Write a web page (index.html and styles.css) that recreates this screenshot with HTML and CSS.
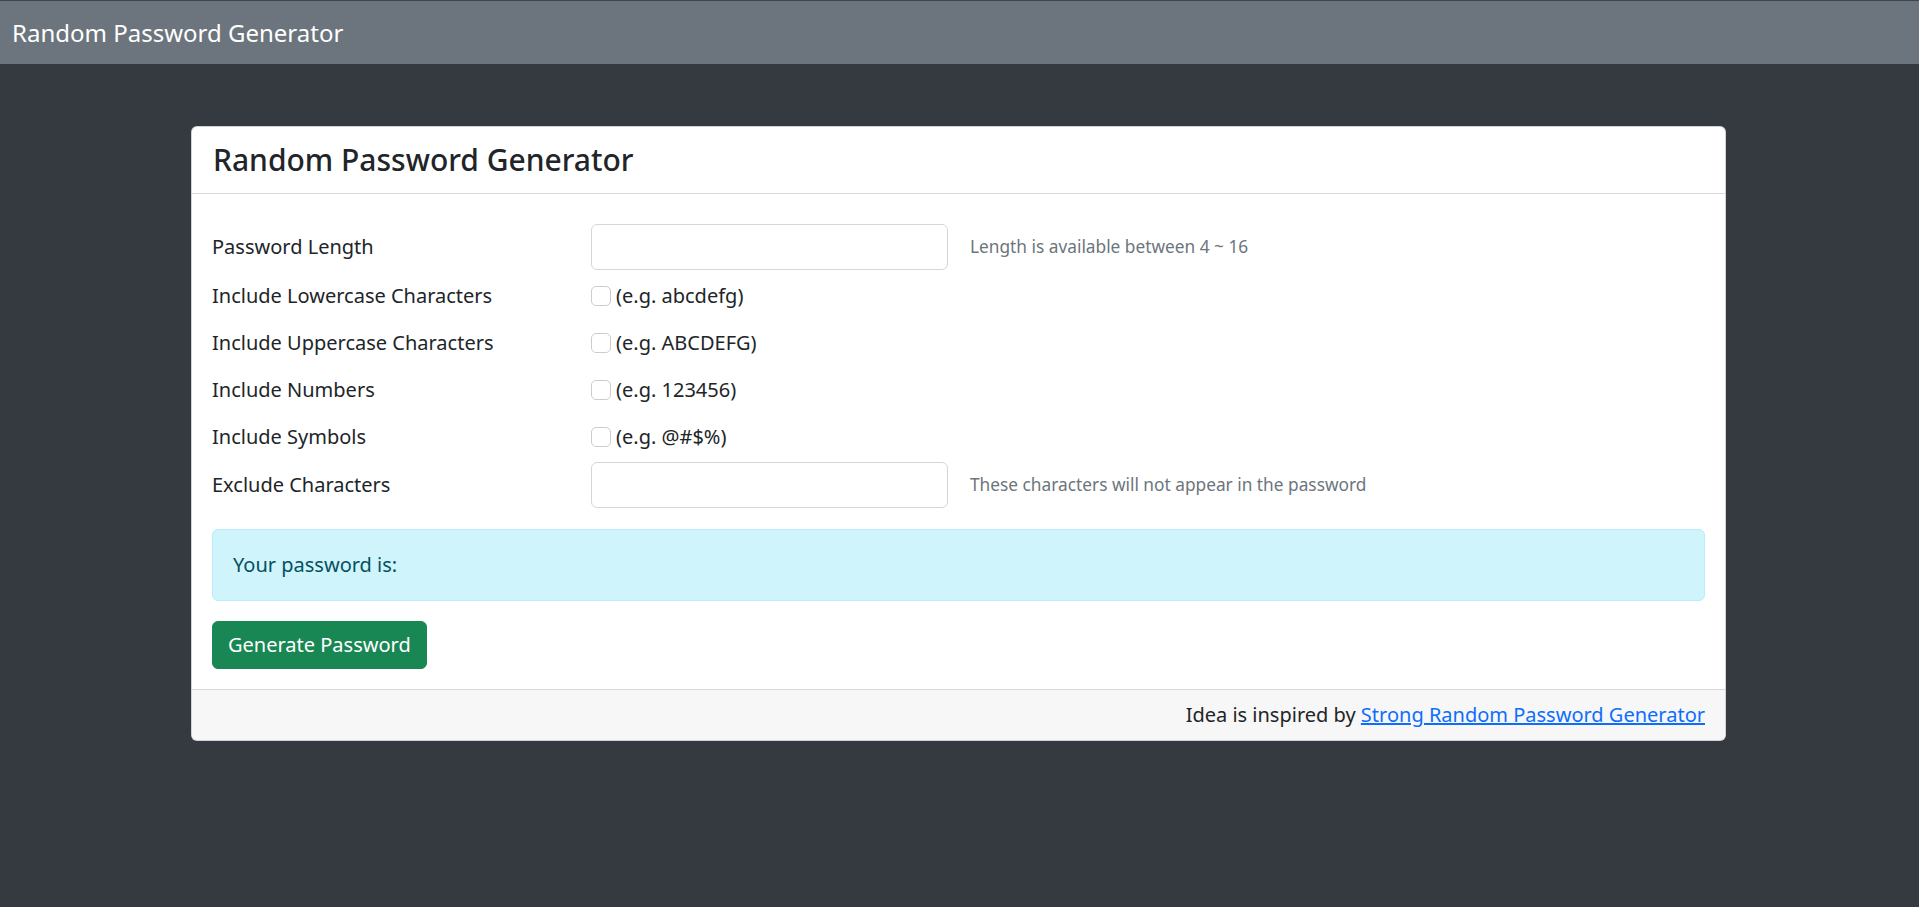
FILE: index.html
```html
<!DOCTYPE html>
<html lang="en">
<head>
<meta charset="utf-8">
<title>Random Password Generator</title>
<link rel="stylesheet" href="styles.css">
</head>
<body>
<nav class="navbar"><span class="brand">Random Password Generator</span></nav>
<main class="page">
  <section class="card">
    <header class="card-header"><h4 class="card-title">Random Password Generator</h4></header>
    <div class="card-body">
      <form class="form">
        <div class="row row-input">
          <label class="label" for="len">Password Length</label>
          <input class="control" id="len" type="text">
          <span class="help">Length is available between 4 ~ 16</span>
        </div>
        <div class="row row-check">
          <span class="label">Include Lowercase Characters</span>
          <label class="check"><span class="box"></span>(e.g. abcdefg)</label>
        </div>
        <div class="row row-check">
          <span class="label">Include Uppercase Characters</span>
          <label class="check"><span class="box"></span>(e.g. ABCDEFG)</label>
        </div>
        <div class="row row-check">
          <span class="label">Include Numbers</span>
          <label class="check"><span class="box"></span>(e.g. 123456)</label>
        </div>
        <div class="row row-check">
          <span class="label">Include Symbols</span>
          <label class="check"><span class="box"></span>(e.g. @#$%)</label>
        </div>
        <div class="row row-input">
          <label class="label" for="ex">Exclude Characters</label>
          <input class="control" id="ex" type="text">
          <span class="help">These characters will not appear in the password</span>
        </div>
      </form>
      <div class="alert">Your password is:</div>
      <button class="btn" type="button">Generate Password</button>
    </div>
    <footer class="card-footer">Idea is inspired by <a href="#">Strong Random Password Generator</a></footer>
  </section>
</main>
</body>
</html>
```

FILE: styles.css
```css
* { box-sizing: border-box; }
html, body { margin: 0; padding: 0; }
body {
  background: #343a40;
  font-family: "Noto Sans", "Open Sans", sans-serif;
  font-size: 20px;
  line-height: 1.5;
  color: #212529;
  min-height: 907px;
}
.navbar {
  height: 64px;
  background: #6c757d;
  border-top: 1px solid #3e444a;
  display: flex;
  align-items: center;
  padding: 0 12px;
}
.brand {
  color: #fff;
  font-size: 24px;
  line-height: 1;
}
.page {
  padding: 62px 193px 0 191px;
}
.card {
  background: #fff;
  border: 1px solid rgba(0,0,0,0.175);
  border-radius: 6px;
  overflow: hidden;
}
.card-header {
  height: 67px;
  border-bottom: 1px solid #d9d9d9;
  display: flex;
  align-items: center;
  padding: 0 21px;
}
.card-title {
  margin: 0;
  font-size: 30px;
  font-weight: 500;
  line-height: 1.2;
  color: #212529;
}
.card-body {
  padding: 30px 20px 20px 20px;
}
.form { display: flex; flex-direction: column; }
.row {
  display: grid;
  grid-template-columns: 379px 357px 1fr;
  align-items: center;
}
.row-input { height: 46px; }
.row-check { height: 47px; }
.row-input + .row-check { margin-top: 2px; }
.row-check + .row-input { margin-top: 2px; }
.label { color: #212529; }
.control {
  width: 357px;
  height: 46px;
  border: 1px solid #d3d6da;
  border-radius: 6px;
  background: #fff;
  font: inherit;
  padding: 7px 15px;
}
.help {
  margin-left: 22px;
  font-size: 17.3px;
  color: #6c757d;
}
.check {
  display: flex;
  align-items: center;
  gap: 5px;
  grid-column: 2 / 4;
}
.box {
  width: 20px;
  height: 20px;
  border: 1px solid #c9cdd1;
  border-radius: 5px;
  background: #fff;
}
.alert {
  margin-top: 21px;
  height: 72px;
  background: #cff4fc;
  border: 1px solid #b6effb;
  border-radius: 6px;
  color: #055160;
  padding: 0 20px;
  display: flex;
  align-items: center;
}
.btn {
  margin-top: 20px;
  height: 48px;
  padding: 0 15px;
  background: #198754;
  border: 1px solid #198754;
  border-radius: 6px;
  color: #fff;
  font: inherit;
  display: flex;
  align-items: center;
}
.card-footer {
  height: 51px;
  background: #f7f7f7;
  border-top: 1px solid #d9d9d9;
  padding: 0 20px;
  display: flex;
  align-items: center;
  justify-content: flex-end;
  white-space: pre;
}
.card-footer a { color: #0d6efd; text-decoration: underline; }
```
